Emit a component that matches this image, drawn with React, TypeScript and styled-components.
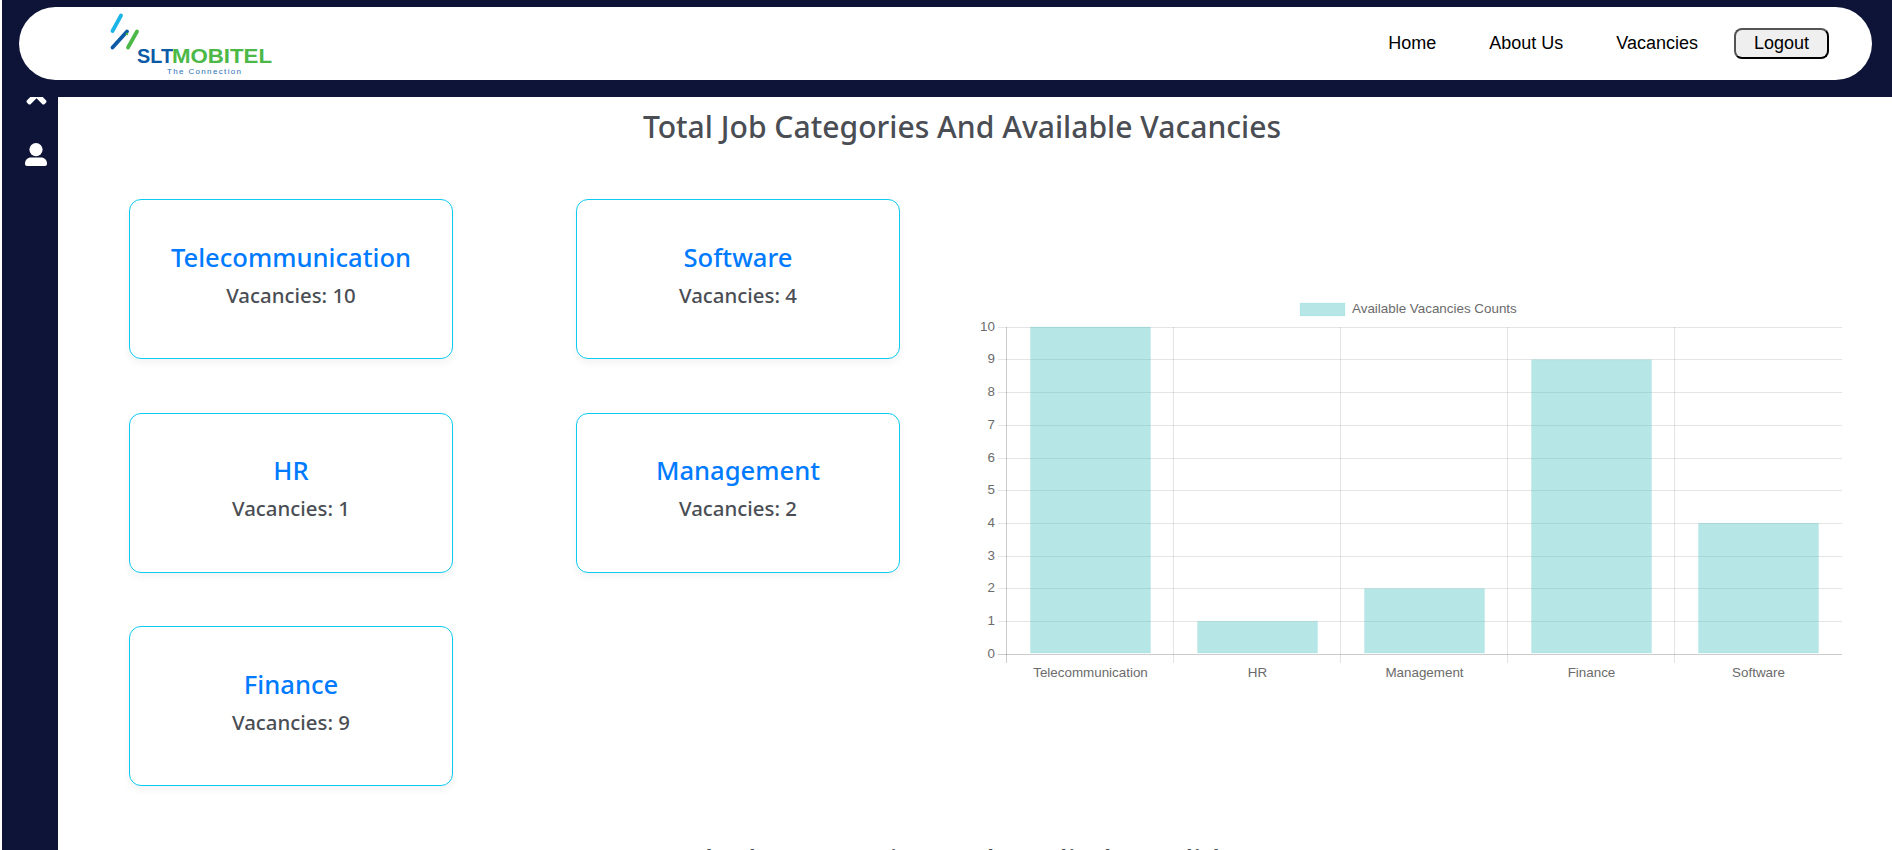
import React, { FC } from 'react';
import styled, { createGlobalStyle } from 'styled-components';
import { FaTimes } from 'react-icons/fa';

const categories = [
  { name: 'Telecommunication', count: 10 },
  { name: 'HR', count: 1 },
  { name: 'Management', count: 2 },
  { name: 'Finance', count: 9 },
  { name: 'Software', count: 4 },
];

// cards run top to bottom in the first column, Software sits beside Telecommunication
const cardOrder = [
  categories[0],
  categories[4],
  categories[1],
  categories[2],
  categories[3],
];

const navLinks = ['Home', 'About Us', 'Vacancies'];

const GlobalStyle = createGlobalStyle`
  html, body {
    margin: 0;
    height: 850px;
    overflow: hidden;
    background: #fff;
  }
`;

const Logo: FC = () => (
  <LogoSvg viewBox="0 0 170 62" width="170" height="62">
    <line x1="21" y1="5.5" x2="12.5" y2="21" stroke="#1ab4e8" strokeWidth="3.8" strokeLinecap="round" />
    <line x1="27" y1="21.5" x2="12.5" y2="37.5" stroke="#0b5aa6" strokeWidth="3.8" strokeLinecap="round" />
    <line x1="37" y1="21.5" x2="28" y2="37.5" stroke="#4cb848" strokeWidth="3.8" strokeLinecap="round" />
    <circle cx="27" cy="24" r="1.3" fill="#4cb848" />
    <text x="37" y="53" fontFamily="Liberation Sans, sans-serif" fontWeight="700" fontSize="21" fill="#0b5aa6" textLength="36" lengthAdjust="spacingAndGlyphs">
      SLT
    </text>
    <text x="72" y="53" fontFamily="Liberation Sans, sans-serif" fontWeight="700" fontSize="21" fill="#4cb848" textLength="100" lengthAdjust="spacingAndGlyphs">
      MOBITEL
    </text>
    <text x="67" y="64" fontFamily="Liberation Sans, sans-serif" fontSize="8" fill="#2a6fb5" textLength="74">
      The Connection
    </text>
  </LogoSvg>
);

const UserIcon: FC = () => (
  <UserSvg viewBox="0 0 22 23" width="22" height="23">
    <circle cx="11" cy="6.6" r="6.6" />
    <path d="M6 14.5h10c3.4 0 6 2.6 6 6v.5c0 1.2-.9 2-2 2H2c-1.100 0-2-.8-2-2v-.5c0-3.400 2.600-6 6-6z" />
  </UserSvg>
);

const Chart: FC = () => {
  const left = 42;
  const right = 877;
  const top = 34;
  const bottom = 361;
  const step = (right - left) / categories.length;
  const rowH = (bottom - top) / 10;

  return (
    <ChartSvg viewBox="0 0 880 400" width="880" height="400">
      <rect x="335" y="10" width="45" height="13" fill="rgba(75,192,192,0.4)" stroke="rgba(75,192,192,0.1)" />
      <text x="387" y="20" fontSize="13.4" fill="#6b6b6b">
        Available Vacancies Counts
      </text>

      {Array.from({ length: 11 }, (_, i) => {
        const y = Math.round(bottom - i * rowH - 0.2) + 0.5;
        return (
          <g key={i}>
            <line x1={left - 9} x2={right} y1={y} y2={y} stroke={i === 0 ? 'rgba(0,0,0,0.2)' : 'rgba(0,0,0,0.1)'} />
            <text x={left - 12} y={y + 3} fontSize="13.4" fill="#6b6b6b" textAnchor="end">
              {i}
            </text>
          </g>
        );
      })}

      {Array.from({ length: 5 }, (_, i) => {
        const x = Math.round(left + i * step) - 0.5;
        return (
          <line key={i} x1={x} x2={x} y1={top} y2={bottom + 9} stroke={i === 0 ? 'rgba(0,0,0,0.2)' : 'rgba(0,0,0,0.1)'} />
        );
      })}

      {categories.map(({ name, count }, i) => {
        const cx = left + step * (i + 0.5);
        return (
          <g key={name}>
            <rect
              x={cx - 60}
              y={bottom - count * rowH}
              width="120"
              height={count * rowH - 1}
              fill="rgba(75,192,192,0.4)"
              stroke="rgba(75,192,192,0.1)"
            />
            <text x={cx} y={bottom + 23} fontSize="13.4" fill="#6b6b6b" textAnchor="middle">
              {name}
            </text>
          </g>
        );
      })}
    </ChartSvg>
  );
};

const App: FC = () => (
  <>
    <GlobalStyle />
    <Page>
      <Sidebar>
        <CloseIcon />
        <UserIcon />
      </Sidebar>
      <Main>
        <Title>Total Job Categories And Available Vacancies</Title>
        <Overview>
          <CardGrid>
            {cardOrder.map(({ name, count }) => (
              <Card key={name}>
                <CardName>{name}</CardName>
                <CardCount>Vacancies: {count}</CardCount>
              </Card>
            ))}
          </CardGrid>
          <Chart />
        </Overview>
        <NextTitle>Total Job Categories And Applied Candidates</NextTitle>
      </Main>
    </Page>
    <TopBar>
      <NavPill>
        <Logo />
        <Nav>
          {navLinks.map(link => (
            <NavLink key={link}>{link}</NavLink>
          ))}
          <LogoutButton>Logout</LogoutButton>
        </Nav>
      </NavPill>
    </TopBar>
  </>
);

export default App;

const Page = styled.div`
  display: flex;
  height: 850px;
  padding-left: 2px;
  box-sizing: border-box;
`;

const Sidebar = styled.aside`
  flex: 0 0 56px;
  background: #0d1437;
  display: flex;
  flex-direction: column;
  align-items: center;
  padding: 80px 0 0 12px;
  gap: 34px;
  box-sizing: border-box;
  color: #fff;
`;

const CloseIcon = styled(FaTimes)`
  flex: none;
  font-size: 29px;
`;

const UserSvg = styled.svg`
  flex: none;
  fill: #fff;
`;

const Main = styled.main`
  flex: 1;
  min-width: 0;
  padding-top: 108px;
  background: #fff;
  overflow: hidden;
`;

const Title = styled.h2`
  margin: 0;
  padding-right: 26px;
  text-align: center;
  font-family: 'Noto Sans', 'Open Sans', sans-serif;
  font-size: 30.1px;
  line-height: 38px;
  font-weight: 500;
  color: #4a4e54;
`;

const NextTitle = styled(Title)`
  margin-top: 56px;
`;

const Overview = styled.div`
  display: flex;
  margin-top: 53px;
  padding-left: 71px;
`;

const CardGrid = styled.div`
  display: grid;
  grid-template-columns: repeat(2, 324px);
  grid-auto-rows: 160px;
  column-gap: 123px;
  row-gap: 53.5px;
  width: 771px;
`;

const Card = styled.div`
  display: flex;
  flex-direction: column;
  align-items: center;
  justify-content: center;
  gap: 4px;
  padding-bottom: 7px;
  border: 1px solid #0dcaf0;
  border-radius: 12px;
  box-shadow: 0 4px 8px rgba(0, 0, 0, 0.05);
  box-sizing: border-box;
  background: #fff;
  font-family: 'Noto Sans', 'Open Sans', sans-serif;
`;

const CardName = styled.div`
  font-size: 25.6px;
  line-height: 36px;
  font-weight: 500;
  color: #007bff;
`;

const CardCount = styled.div`
  font-size: 20.4px;
  line-height: 30px;
  font-weight: 500;
  color: #4a4e54;
  margin-bottom: 2px;
`;

const ChartSvg = styled.svg`
  flex: none;
  margin: 94px 0 0 65px;
  font-family: 'Liberation Sans', Arial, sans-serif;
`;

const TopBar = styled.header`
  position: fixed;
  top: 0;
  left: 2px;
  right: 0;
  height: 97px;
  padding: 7px 20px 17px 17px;
  box-sizing: border-box;
  background: #0d1437;
  border-top-left-radius: 6px;
`;

const NavPill = styled.div`
  display: flex;
  align-items: center;
  justify-content: space-between;
  height: 73px;
  padding: 0 43px 0 81px;
  background: #fff;
  border-radius: 37px;
  box-sizing: border-box;
`;

const LogoSvg = styled.svg`
  overflow: visible;
  margin-top: -6px;
`;

const Nav = styled.nav`
  display: flex;
  align-items: center;
  font-family: 'Liberation Sans', Arial, sans-serif;
  font-size: 18px;
  color: #000;
`;

const NavLink = styled.a`
  margin-right: 53px;
  cursor: pointer;

  &:nth-child(3) {
    margin-right: 36px;
  }
`;

const LogoutButton = styled.button`
  width: 95px;
  height: 31px;
  padding: 0;
  border: 2px outset #000;
  border-radius: 8px;
  background: #efefef;
  font: inherit;
  color: #000;
`;
